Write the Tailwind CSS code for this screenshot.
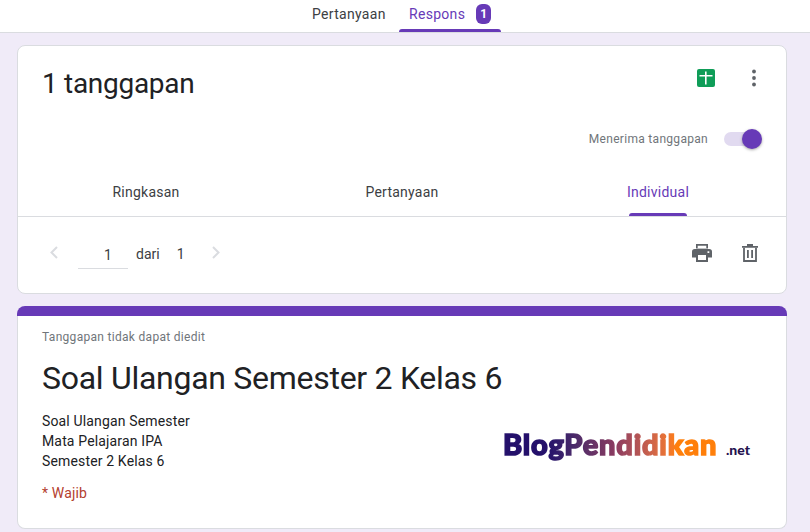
<!DOCTYPE html>
<html><head><meta charset="utf-8"><script src="https://cdn.jsdelivr.net/npm/@tailwindcss/browser@4"></script></head>
<body class="w-[810px] h-[532px] overflow-hidden bg-[#f0ebf8] font-['Roboto',sans-serif] text-[#202124]">
<header class="h-[33px] bg-white border-b border-[#dadce0] flex justify-center">
  <div class="flex w-[189px] ml-[3px] relative text-[14px] font-normal tracking-[0.3px]">
    <div class="w-[87px] text-[#3c4043] pt-[5px] leading-[18px]">Pertanyaan</div>
    <div class="w-[102px] relative flex items-start pl-[10px] pt-[5px] text-[#673ab7] leading-[18px]">Respons
      <span class="ml-[11px] mt-[-1px] w-[15px] h-[20px] rounded-[6px] bg-[#673ab7] text-white text-[12px] font-bold flex items-center justify-center tracking-normal">1</span>
      <span class="absolute left-0 right-0 bottom-0 h-[3px] bg-[#673ab7] rounded-t-[3px]"></span>
    </div>
  </div>
</header>
<main class="pl-[17px] pt-[12px] w-[787px] flex flex-col gap-[12px]">
  <section class="h-[249px] bg-white rounded-[8px] border border-[#dadce0] flex flex-col">
    <div class="h-[135px] relative pl-[24px] pt-[20px]">
      <h1 class="text-[28px] leading-[36px] font-['Roboto',sans-serif] text-[#202124] tracking-[-0.3px]">1 tanggapan</h1>
      <svg class="absolute left-[679px] top-[23px]" width="18" height="18" viewBox="0 0 18 18"><rect width="18" height="18" rx="2" fill="#0f9d58"/><path d="M2.500 6H8V2.500h1.600V6h5.900v1.600H9.600V15.500H8V7.600H2.500z" fill="#fff"/></svg>
      <svg class="absolute left-[733px] top-[23px]" width="6" height="18" viewBox="0 0 6 18"><circle cx="3" cy="2.500" r="1.900" fill="#5f6368"/><circle cx="3" cy="9" r="1.900" fill="#5f6368"/><circle cx="3" cy="15.500" r="1.900" fill="#5f6368"/></svg>
      <div class="absolute right-[26px] top-[85px] flex items-center">
        <span class="text-[12px] leading-[16px] text-[#70757a] tracking-[0.3px] mr-[16px]">Menerima tanggapan</span>
        <div class="relative w-[36px] h-[14px] rounded-full bg-[#e1daf0]"><span class="absolute right-[-2px] top-[-3px] w-[20px] h-[20px] rounded-full bg-[#673ab7] shadow-[0_1px_3px_rgba(0,0,0,0.35)]"></span></div>
      </div>
    </div>
    <div class="border-b border-[#dadce0] grid grid-cols-3 h-[36px] pt-[1px] text-[14px] leading-[20px] font-normal tracking-[0.25px] text-[#3c4043] text-center">
      <div>Ringkasan</div>
      <div>Pertanyaan</div>
      <div class="relative text-[#673ab7]">Individual<span class="absolute left-[99px] w-[58px] bottom-0 h-[3px] bg-[#673ab7] rounded-t-[3px]"></span></div>
    </div>
    <div class="flex-1 relative flex items-start pl-[31px] pt-[27px]">
      <svg class="mr-[19px] mt-[1px]" width="10" height="16" viewBox="0 0 10 16"><path d="M8 2 2.500 7.500 8 13" fill="none" stroke="#dadce0" stroke-width="2"/></svg>
      <div class="w-[50px] h-[25px] border-b border-[#dadce0] text-center text-[14px] leading-[20px] pt-[1px] pl-[10px] text-[#3c4043]">1</div>
      <span class="ml-[8px] text-[14px] leading-[20px] text-[#3c4043]">dari</span>
      <span class="ml-[17px] text-[14px] leading-[20px] text-[#3c4043]">1</span>
      <svg class="ml-[26px] mt-[1px]" width="10" height="16" viewBox="0 0 10 16"><path d="M2 2 7.500 7.500 2 13" fill="none" stroke="#dadce0" stroke-width="2"/></svg>
      <div class="absolute left-[674px] top-[27px] flex gap-[30px]">
        <svg width="20" height="18" viewBox="0 0 20 18"><path fill="#5f6368" fill-rule="evenodd" d="M4 0h12v4.500H4zM2.800 5h14.400A2.800 2.800 0 0 1 20 7.800V13.500h-4V18H4v-4.500H0V7.800A2.800 2.800 0 0 1 2.800 5zM6 11v5h8v-5z"/><path fill="#fff" d="M5.700 1.700h8.600v2.600H5.700zM15.500 7.300h1.800v1.600h-1.800z"/></svg>
        <svg width="16" height="18" viewBox="0 0 16 18"><path fill="none" stroke="#5f6368" stroke-width="1.800" d="M2 3.700V17h12V3.700"/><path fill="#5f6368" d="M0 2h5V0h6v2h5v1.800H0zM5 6h1.800v8H5zM9.200 6H11v8H9.200z"/></svg>
      </div>
    </div>
  </section>
  <section class="h-[223px] relative">
    <div class="h-[10px] bg-[#673ab7] rounded-t-[8px]"></div>
    <div class="h-[213px] bg-white border-x border-b border-[#dadce0] rounded-b-[8px] pl-[24px] pt-[13px]">
      <p class="text-[12px] leading-[16px] text-[#70757a] tracking-[0.3px]">Tanggapan tidak dapat diedit</p>
      <h2 class="mt-[13px] text-[32px] leading-[40px] font-['Roboto',sans-serif] text-[#202124] tracking-[-0.28px]">Soal Ulangan Semester 2 Kelas 6</h2>
      <div class="mt-[13px] text-[14px] leading-[20px] text-[#202124] tracking-[0.15px]">
        <p>Soal Ulangan Semester</p><p>Mata Pelajaran IPA</p><p>Semester 2 Kelas 6</p>
      </div>
      <p class="mt-[12px] text-[14px] leading-[20px] text-[#b3402f] tracking-[0.15px]">* Wajib</p>
    </div>
    <div class="absolute left-[486px] top-[118px] flex items-baseline font-['Lato',sans-serif] font-black whitespace-nowrap">
      <span class="text-[29px] leading-[40px] tracking-[0.8px] text-transparent [-webkit-text-stroke:1.5px_transparent] bg-clip-text bg-gradient-to-r from-[#24106b] from-20% via-[#8a3a60] via-50% to-[#ff7f0a] to-78% w-[223px]">BlogPendidikan</span>
      <span class="text-[14px] text-[#24124f]">.net</span>
    </div>
  </section>
</main>
</body></html>
